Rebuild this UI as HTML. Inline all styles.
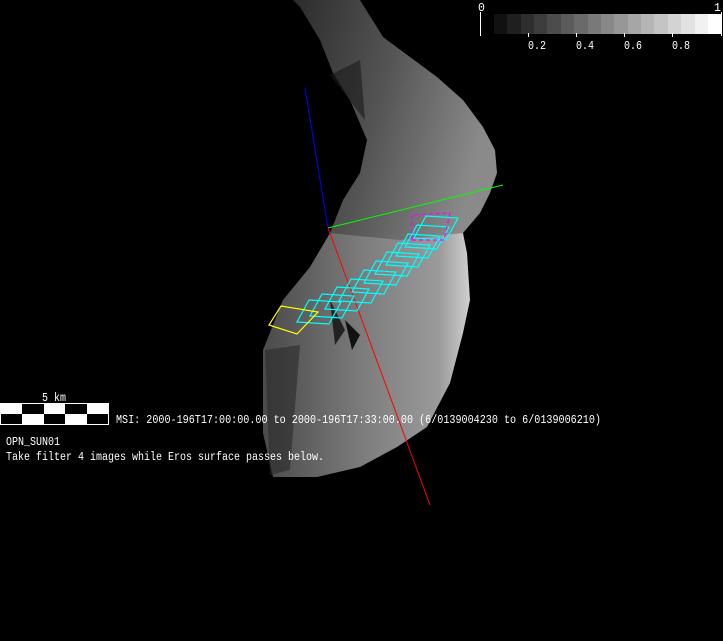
<!DOCTYPE html>
<html><head><meta charset="utf-8"><style>
html,body{margin:0;padding:0;background:#000;width:723px;height:641px;overflow:hidden}
svg{display:block}
text{font-family:"Liberation Mono",monospace;fill:#fff;font-size:11.5px}
</style></head><body>
<svg width="723" height="641" viewBox="0 0 723 641" xmlns="http://www.w3.org/2000/svg">
<defs>
<linearGradient id="lo" x1="0" y1="0" x2="1" y2="0">
<stop offset="0" stop-color="#4a4a4a"/><stop offset="0.5" stop-color="#7e7e7e"/><stop offset="0.85" stop-color="#9a9a9a"/><stop offset="1" stop-color="#d0d0d0"/>
</linearGradient>
<linearGradient id="up" x1="0" y1="0" x2="1" y2="0.3">
<stop offset="0" stop-color="#3a3a3a"/><stop offset="0.5" stop-color="#707070"/><stop offset="1" stop-color="#b8b8b8"/>
</linearGradient>
</defs>
<path d="M293,0 L360,0 L383,37 L410,57 L437,77 L463,100 L483,127 L495,150 L497,173 L490,193 L480,213 L463,233 L400,250 L330,233 L343,200 L360,173 L367,140 L350,100 L333,73 L320,40 L300,7 Z" fill="url(#up)" opacity="0.75"/>
<path d="M330,233 L400,240 L463,233 L467,253 L470,300 L463,333 L450,383 L427,427 L397,447 L360,467 L317,477 L273,477 L263,433 L263,350 L283,300 L310,267 Z" fill="url(#lo)"/>
<path d="M265,350 L300,345 L290,470 L270,475 Z" fill="#2a2a2a" opacity="0.6"/>
<path d="M330,300 L345,330 L335,345 Z" fill="#222"/>
<path d="M345,320 L360,335 L352,350 Z" fill="#111"/>
<path d="M330,75 L365,120 L360,60 Z" fill="#1a1a1a" opacity="0.6"/>
<line x1="305" y1="88" x2="328" y2="228" stroke="#00f" stroke-width="1"/>
<line x1="328" y1="228" x2="503" y2="185" stroke="#0f0" stroke-width="1"/>
<line x1="328" y1="228" x2="430" y2="505" stroke="#f00" stroke-width="1"/>
<g fill="none" stroke="#0ff" stroke-width="1.2">
<path d="M297,322 l32,2 l12,-22 l-32,-2 Z"/>
<path d="M310,316 l32,2 l12,-22 l-32,-2 Z"/>
<path d="M325,309 l32,2 l12,-22 l-32,-2 Z"/>
<path d="M339,301 l32,2 l12,-22 l-32,-2 Z"/>
<path d="M352,292 l32,2 l12,-22 l-32,-2 Z"/>
<path d="M364,283 l32,2 l12,-22 l-32,-2 Z"/>
<path d="M375,274 l32,2 l12,-22 l-32,-2 Z"/>
<path d="M386,265 l32,2 l12,-22 l-32,-2 Z"/>
<path d="M396,256 l32,2 l12,-22 l-32,-2 Z"/>
<path d="M405,247 l32,2 l12,-22 l-32,-2 Z"/>
<path d="M414,238 l32,2 l12,-22 l-32,-2 Z"/>
</g>
<path d="M412,240 L444,240 L450,213 L412,215 Z" fill="none" stroke="#f0f" stroke-width="1.2" stroke-dasharray="4,3"/>
<path d="M269,325 L281,306 L318,312 L297,334 Z" fill="none" stroke="#ff0" stroke-width="1.2"/>
<g>
<rect x="494" y="14" width="14" height="20" fill="#111"/>
<rect x="507" y="14" width="14" height="20" fill="#1f1f1f"/>
<rect x="521" y="14" width="14" height="20" fill="#2e2e2e"/>
<rect x="534" y="14" width="14" height="20" fill="#3d3d3d"/>
<rect x="547" y="14" width="14" height="20" fill="#4c4c4c"/>
<rect x="561" y="14" width="14" height="20" fill="#5b5b5b"/>
<rect x="574" y="14" width="14" height="20" fill="#6a6a6a"/>
<rect x="588" y="14" width="14" height="20" fill="#797979"/>
<rect x="601" y="14" width="14" height="20" fill="#888"/>
<rect x="614" y="14" width="14" height="20" fill="#979797"/>
<rect x="628" y="14" width="14" height="20" fill="#a6a6a6"/>
<rect x="641" y="14" width="14" height="20" fill="#b5b5b5"/>
<rect x="654" y="14" width="14" height="20" fill="#c4c4c4"/>
<rect x="668" y="14" width="14" height="20" fill="#d3d3d3"/>
<rect x="681" y="14" width="14" height="20" fill="#e2e2e2"/>
<rect x="695" y="14" width="14" height="20" fill="#f1f1f1"/>
<rect x="708" y="14" width="13" height="20" fill="#fff"/>
</g>
<line x1="480.5" y1="12" x2="480.5" y2="36" stroke="#fff"/>
<line x1="721.5" y1="12" x2="721.5" y2="36" stroke="#fff"/>
<g stroke="#fff"><line x1="528.5" y1="33" x2="528.5" y2="37"/><line x1="576.5" y1="33" x2="576.5" y2="37"/><line x1="624.5" y1="33" x2="624.5" y2="37"/><line x1="672.5" y1="33" x2="672.5" y2="37"/></g>
<text x="478" y="11">0</text>
<text x="714" y="11">1</text>
<text x="528" y="49" textLength="18" lengthAdjust="spacingAndGlyphs">0.2</text>
<text x="576" y="49" textLength="18" lengthAdjust="spacingAndGlyphs">0.4</text>
<text x="624" y="49" textLength="18" lengthAdjust="spacingAndGlyphs">0.6</text>
<text x="672" y="49" textLength="18" lengthAdjust="spacingAndGlyphs">0.8</text>
<rect x="0.5" y="403.5" width="108" height="21" fill="#fff" stroke="#fff"/>
<g fill="#000">
<rect x="22" y="404" width="22" height="10"/><rect x="65" y="404" width="22" height="10"/>
<rect x="1" y="414" width="21" height="10"/><rect x="44" y="414" width="21" height="10"/><rect x="87" y="414" width="21" height="10"/>
</g>
<text x="42" y="401" textLength="24" lengthAdjust="spacingAndGlyphs">5 km</text>
<text x="116" y="423" textLength="485" lengthAdjust="spacingAndGlyphs">MSI:  2000-196T17:00:00.00 to 2000-196T17:33:00.00 (6/0139004230 to 6/0139006210)</text>
<text x="6" y="445" textLength="54" lengthAdjust="spacingAndGlyphs">OPN_SUN01</text>
<text x="6" y="460" textLength="318" lengthAdjust="spacingAndGlyphs">Take filter 4 images while Eros surface passes below.</text>
</svg>
</body></html>
